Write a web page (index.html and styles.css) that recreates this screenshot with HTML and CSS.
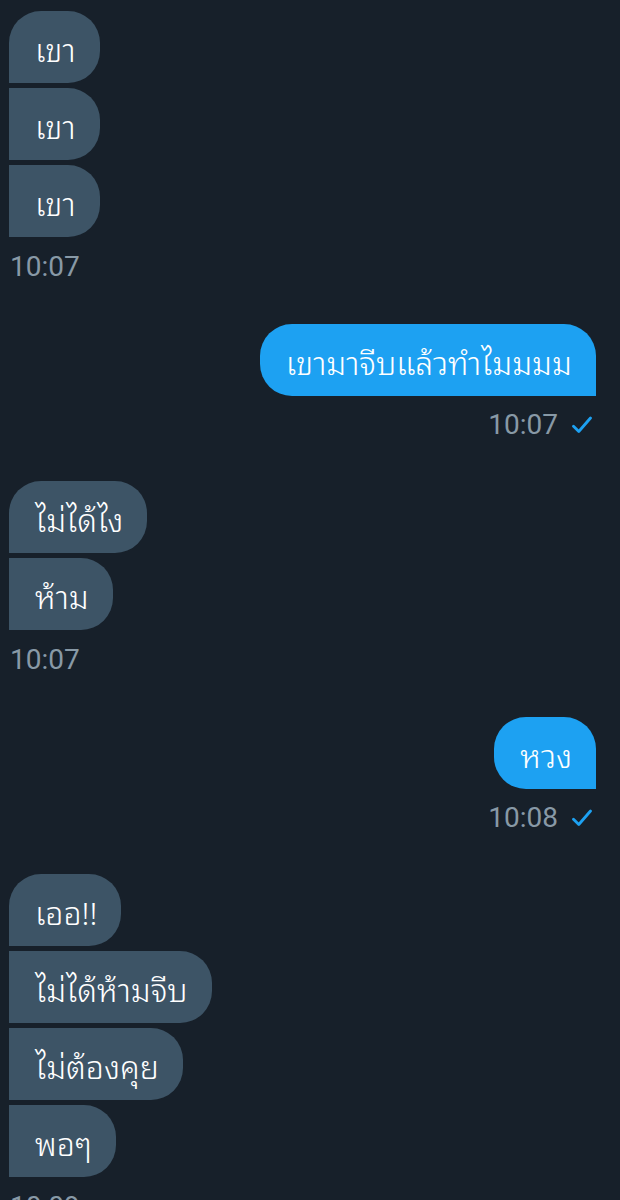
FILE: index.html
```html
<!DOCTYPE html>
<html lang="th">
<head>
<meta charset="utf-8">
<title>Messages</title>
<link rel="stylesheet" href="styles.css">
</head>
<body>
<main class="chat">
  <section class="group recv">
    <div class="bubble first">เขา</div>
    <div class="bubble">เขา</div>
    <div class="bubble">เขา</div>
    <div class="time">10:07</div>
  </section>
  <section class="group sent">
    <div class="bubble">เขามาจีบแล้วทำไมมมม</div>
    <div class="time"><span>10:07</span><svg class="check" viewBox="0 0 20 18" width="20" height="18"><path d="M1.5 10.2 L6.8 15.5 L18.5 2" fill="none" stroke="#1da1f2" stroke-width="2.8" stroke-linecap="round" stroke-linejoin="round"/></svg></div>
  </section>
  <section class="group recv">
    <div class="bubble first">ไม่ได้ไง</div>
    <div class="bubble">ห้าม</div>
    <div class="time">10:07</div>
  </section>
  <section class="group sent">
    <div class="bubble">หวง</div>
    <div class="time"><span>10:08</span><svg class="check" viewBox="0 0 20 18" width="20" height="18"><path d="M1.5 10.2 L6.8 15.5 L18.5 2" fill="none" stroke="#1da1f2" stroke-width="2.8" stroke-linecap="round" stroke-linejoin="round"/></svg></div>
  </section>
  <section class="group recv">
    <div class="bubble first">เออ!!</div>
    <div class="bubble">ไม่ได้ห้ามจีบ</div>
    <div class="bubble">ไม่ต้องคุย</div>
    <div class="bubble">พอๆ</div>
    <div class="time">10:09</div>
  </section>
</main>
</body>
</html>
```

FILE: styles.css
```css
html, body {
  margin: 0;
  padding: 0;
  background: #17202a;
  height: 1200px;
  overflow: hidden;
}
.chat {
  display: flex;
  flex-direction: column;
  gap: 41px;
  padding: 11px 24px 0 9px;
  font-family: "Noto Sans Thai Looped", "Noto Sans Thai", "Noto Sans Thai UI", "Noto Sans", Roboto, sans-serif;
}
.group {
  display: flex;
  flex-direction: column;
  gap: 5px;
}
.recv { align-items: flex-start; }
.sent { align-items: flex-end; }
.bubble {
  box-sizing: border-box;
  height: 72px;
  padding: 0 24px 0 26px;
  display: flex;
  align-items: center;
  font-size: 32px;
  font-weight: 300;
  color: #ffffff;
  white-space: nowrap;
}
.recv .bubble {
  background: #3d5466;
  border-radius: 0 32px 32px 0;
}
.recv .bubble.first {
  border-radius: 32px 32px 32px 0;
}
.sent .bubble {
  background: #1da1f2;
  border-radius: 32px 32px 0 32px;
}
.time {
  font-family: Roboto, "Noto Sans", sans-serif;
  font-size: 28px;
  line-height: 32px;
  color: #8899a6;
  display: flex;
  align-items: center;
  gap: 14px;
}
.recv .time {
  margin-top: 9px;
  padding-left: 1px;
}
.sent .time {
  margin-top: 8px;
  line-height: 31px;
  padding-right: 4px;
}
.check {
  display: block;
}
```
